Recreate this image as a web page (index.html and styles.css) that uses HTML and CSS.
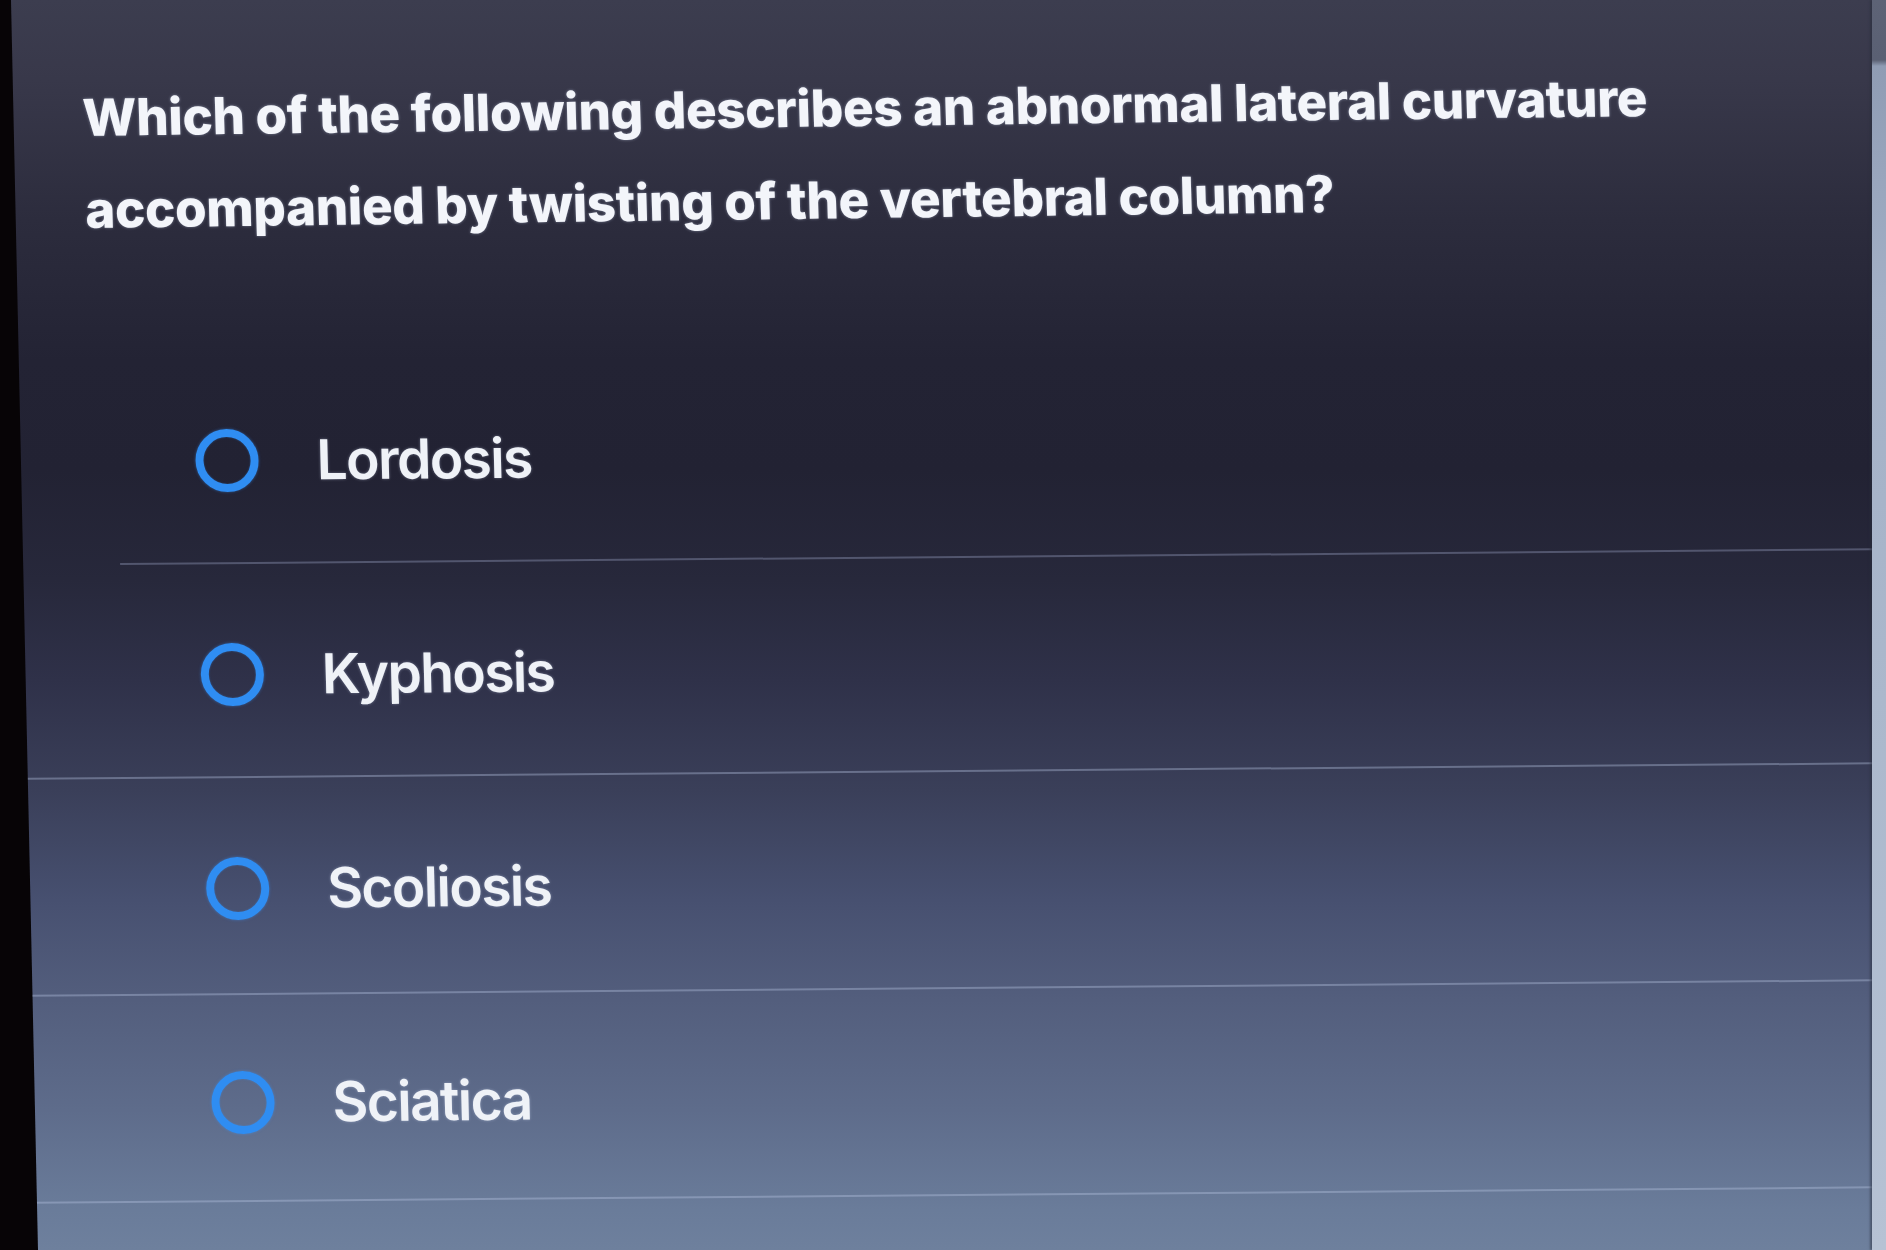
FILE: index.html
```html
<!DOCTYPE html>
<html lang="en">
<head>
<meta charset="utf-8">
<title>Question</title>
<link rel="stylesheet" href="styles.css">
</head>
<body>
<div class="device">
  <div class="screen">
    <div class="content">
      <h1 class="question">Which of the following describes an abnormal lateral curvature<br>accompanied by twisting of the vertebral column?</h1>
      <ul class="options">
        <li class="option option-first"><span class="radio"></span><span class="label">Lordosis</span></li>
        <li class="option"><span class="radio"></span><span class="label">Kyphosis</span></li>
        <li class="option option-third"><span class="radio"></span><span class="label">Scoliosis</span></li>
        <li class="option option-last"><span class="radio"></span><span class="label">Sciatica</span></li>
      </ul>
    </div>
  </div>
  <div class="bezel-right"></div>
</div>
</body>
</html>
```

FILE: styles.css
```css
html, body {
  margin: 0;
  padding: 0;
}
body {
  width: 1886px;
  height: 1250px;
  overflow: hidden;
  background: #070406;
}
.device {
  display: flex;
  width: 1886px;
  height: 1250px;
}
.screen {
  flex: 1;
  height: 1250px;
  overflow: hidden;
  clip-path: polygon(11px 0, 100% 0, 100% 100%, 38px 100%);
  background: linear-gradient(to bottom,
    #3c3d4f 0px,
    #38384a 80px,
    #2c2c3d 220px,
    #232334 360px,
    #222233 470px,
    #27283b 580px,
    #2f3149 680px,
    #3a3f59 790px,
    #475070 900px,
    #535e7d 1000px,
    #5e6c8b 1110px,
    #6a7c9a 1210px,
    #6e809d 1250px);
}
.content {
  width: 1900px;
  transform-origin: 0 0;
  transform: rotate(-0.48deg) skewX(0.95deg);
}
.question {
  margin: 0 0 95px 0;
  padding: 73px 0 0 79px;
  font-family: Inter, "Liberation Sans", sans-serif;
  font-weight: 800;
  font-size: 51px;
  line-height: 92px;
  letter-spacing: -0.3px;
  color: #f3f5fa;
  text-shadow: 0 0 3px rgba(220, 230, 255, 0.45);
  transform-origin: 0 0;
  transform: rotate(-0.25deg);
  white-space: nowrap;
}
.options {
  list-style: none;
  margin: 0;
  padding: 0;
}
.option {
  display: flex;
  align-items: center;
  gap: 58px;
  height: 64px;
  padding: 78px 0 70px 184px;
  border-bottom: 2px solid rgba(185, 198, 225, 0.38);
}
.option-first {
  margin-left: 106px;
  padding-left: 78px;
  border-bottom-color: rgba(150, 158, 190, 0.4);
}
.option-third {
  padding-bottom: 73px;
}
.option-last {
  padding-top: 75px;
  padding-bottom: 66px;
}
.radio {
  box-sizing: border-box;
  width: 63px;
  height: 63px;
  border: 8px solid #2f8df2;
  border-radius: 50%;
  box-shadow: 0 0 3px rgba(60, 150, 255, 0.5), inset 0 0 2px rgba(60, 150, 255, 0.4);
  flex: none;
}
.label {
  font-family: Inter, "Liberation Sans", sans-serif;
  font-weight: 600;
  font-size: 55px;
  letter-spacing: -1.6px;
  color: #eff2f7;
  text-shadow: 0 0 3px rgba(220, 230, 255, 0.4);
}
.bezel-right {
  position: relative;
  z-index: 1;
  width: 14px;
  height: 1250px;
  flex: none;
  background: linear-gradient(to bottom,
    #5d6376 0px,
    #5a6073 60px,
    #8f9cb4 66px,
    #a3b0c6 300px,
    #abb8cc 700px,
    #b6c2d4 1250px);
  box-shadow: -2px 0 2px rgba(40, 45, 60, 0.5);
}
```
